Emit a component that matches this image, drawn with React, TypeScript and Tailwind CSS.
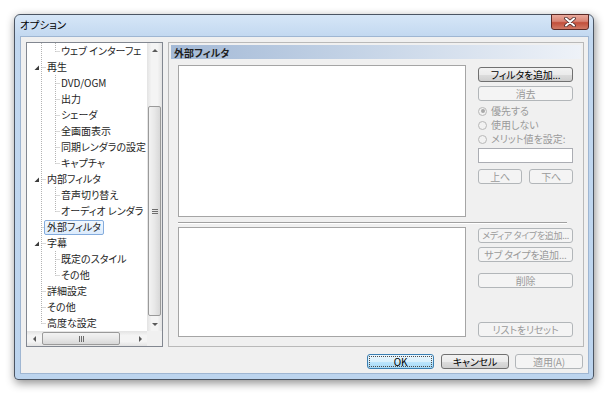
import clsx from 'clsx'

type Line = 'pipe' | 'tee' | 'end'

type Node = {
  label: string
  level: 0 | 1
  l0: Line
  l1?: Line
  open?: boolean
  selected?: boolean
}

const tree: Node[] = [
  { label: 'ウェブ インターフェ', level: 1, l0: 'pipe', l1: 'end' },
  { label: '再生', level: 0, l0: 'tee', open: true },
  { label: 'DVD/OGM', level: 1, l0: 'pipe', l1: 'tee' },
  { label: '出力', level: 1, l0: 'pipe', l1: 'tee' },
  { label: 'シェーダ', level: 1, l0: 'pipe', l1: 'tee' },
  { label: '全画面表示', level: 1, l0: 'pipe', l1: 'tee' },
  { label: '同期レンダラの設定', level: 1, l0: 'pipe', l1: 'tee' },
  { label: 'キャプチャ', level: 1, l0: 'pipe', l1: 'end' },
  { label: '内部フィルタ', level: 0, l0: 'tee', open: true },
  { label: '音声切り替え', level: 1, l0: 'pipe', l1: 'tee' },
  { label: 'オーディオ レンダラ', level: 1, l0: 'pipe', l1: 'end' },
  { label: '外部フィルタ', level: 0, l0: 'tee', selected: true },
  { label: '字幕', level: 0, l0: 'tee', open: true },
  { label: '既定のスタイル', level: 1, l0: 'pipe', l1: 'tee' },
  { label: 'その他', level: 1, l0: 'pipe', l1: 'end' },
  { label: '詳細設定', level: 0, l0: 'tee' },
  { label: 'その他', level: 0, l0: 'tee' },
  { label: '高度な設定', level: 0, l0: 'end' },
]

// dotted tree connector for one indent column
function Cell({ line, open }: { line?: Line; open?: boolean }) {
  return (
    <svg width="14" height="16" className="shrink-0">
      {line && (
        <line x1="7.5" y1="0" x2="7.5" y2={line === 'end' ? 8.5 : 16} stroke="#b4b4b4" strokeDasharray="1 1" />
      )}
      {line && line !== 'pipe' && (
        <line x1="7.5" y1="8.5" x2="12" y2="8.5" stroke="#b4b4b4" strokeDasharray="1 1" />
      )}
      {open && <polygon points="0.5,11 5,6.5 5,11" fill="#3c3c3c" />}
    </svg>
  )
}

function TreeRow({ n }: { n: Node }) {
  return (
    <div className="h-[16px] flex items-center pl-[7px] whitespace-nowrap">
      <Cell line={n.l0} open={n.open} />
      {n.level === 1 && <Cell line={n.l1} />}
      <span
        className={clsx(
          'ml-[-4px] px-[2px] h-[15px] flex items-center border rounded-[2px] leading-none',
          n.selected
            ? 'border-[#84acdd] bg-[linear-gradient(180deg,#f2f8fe,#dcebfc)]'
            : 'border-transparent'
        )}
      >
        {n.label}
      </span>
    </div>
  )
}

function Arrow({ dir }: { dir: 'up' | 'down' | 'left' | 'right' }) {
  const pts = {
    up: '1,5 4,2 7,5',
    down: '1,3 4,6 7,3',
    left: '5,1 2,4 5,7',
    right: '3,1 6,4 3,7',
  }[dir]
  return (
    <svg width="8" height="8">
      <polygon points={pts} fill="#5a5a5a" />
    </svg>
  )
}

function ScrollV() {
  return (
    <div className="w-[15px] flex flex-col bg-[linear-gradient(90deg,#e3e3e3,#f4f4f4_30%,#f4f4f4_70%,#e3e3e3)]">
      <div className="h-[15px] flex items-center justify-center">
        <Arrow dir="up" />
      </div>
      <div className="h-[48px]" />
      <div className="flex-1 mx-[1px] rounded-[2px] border border-[#9a9a9a] bg-[linear-gradient(90deg,#f3f3f3,#e8e8e8_50%,#d8d8d8)] flex flex-col items-center justify-center gap-[1px]">
        <div className="w-[6px] h-[1px] bg-[#6d6d6d]" />
        <div className="w-[6px] h-[1px] bg-[#6d6d6d]" />
        <div className="w-[6px] h-[1px] bg-[#6d6d6d]" />
      </div>
      <div className="h-[15px] flex items-center justify-center">
        <Arrow dir="down" />
      </div>
    </div>
  )
}

function ScrollH() {
  return (
    <div className="h-[15px] flex bg-[linear-gradient(180deg,#e3e3e3,#f4f4f4_30%,#f4f4f4_70%,#e3e3e3)]">
      <div className="w-[15px] flex items-center justify-center">
        <Arrow dir="left" />
      </div>
      <div className="w-[78px] my-[1px] rounded-[2px] border border-[#9a9a9a] bg-[linear-gradient(180deg,#f3f3f3,#e8e8e8_50%,#d8d8d8)] flex items-center justify-center gap-[1px]">
        <div className="w-[1px] h-[6px] bg-[#6d6d6d]" />
        <div className="w-[1px] h-[6px] bg-[#6d6d6d]" />
        <div className="w-[1px] h-[6px] bg-[#6d6d6d]" />
      </div>
      <div className="flex-1" />
      <div className="w-[15px] flex items-center justify-center">
        <Arrow dir="right" />
      </div>
    </div>
  )
}

function Btn({
  children,
  w,
  disabled,
  def,
  small,
}: {
  children: React.ReactNode
  w: string
  disabled?: boolean
  def?: boolean
  small?: boolean
}) {
  return (
    <div
      className={clsx(
        'h-[15px] flex items-center justify-center rounded-[3px] border leading-none shrink-0 whitespace-nowrap overflow-hidden',
        small ? 'text-[9px] tracking-[-0.3px]' : 'text-[10px] tracking-[-0.2px]',
        w,
        disabled && 'border-[#b2b6b9] bg-[#f4f4f4] text-[#9a9a9a]',
        def && 'border-[#3c7fb1] bg-[linear-gradient(180deg,#eaf6fd_0%,#d9f0fc_50%,#bee6fd_51%,#a7d9f5_100%)] text-black',
        !disabled && !def && 'border-[#707070] bg-[linear-gradient(180deg,#f2f2f2_0%,#ebebeb_50%,#dddddd_51%,#cfcfcf_100%)] text-black'
      )}
    >
      {def ? (
        <div className="self-stretch flex-1 m-[1px] border border-dotted border-[#4d4d4d] flex items-center justify-center">
          {children}
        </div>
      ) : (
        children
      )}
    </div>
  )
}

function Radio({ label, checked }: { label: string; checked?: boolean }) {
  return (
    <div className="h-[14px] flex items-center gap-[4px] text-[#9a9a9a]">
      <span className="w-[9px] h-[9px] rounded-full border border-[#b8b8b8] bg-[#f2f2f2] flex items-center justify-center">
        {checked && <span className="w-[4px] h-[4px] rounded-full bg-[#a8a8a8]" />}
      </span>
      <span className="leading-none">{label}</span>
    </div>
  )
}

export default function App() {
  return (
    <div className="w-[612px] h-[398px] bg-white pt-[14px] pl-[14px] font-['Noto_Sans_CJK_JP',sans-serif] [font-feature-settings:'palt'] text-[10px] text-[#1e1e1e]">
      <div className="w-[580px] h-[366px] flex flex-col border border-[#4b5563] rounded-t-[6px] rounded-b-[4px] bg-[linear-gradient(180deg,#d6e6f7_0px,#c2d8f0_22px,#bcd4ee_100%)] shadow-[1px_3px_10px_rgba(0,0,0,0.45)]">
        {/* title bar */}
        <div className="h-[21px] flex items-start pl-[5px] pr-[4px]">
          <span className="h-[20px] flex items-center text-[10.5px] text-black">オプション</span>
          <div className="ml-auto mt-[-1px] w-[38px] h-[16px] rounded-b-[3px] border border-[#5a2a26] bg-[linear-gradient(180deg,#e9a99c_0%,#d98474_45%,#c24f3b_55%,#d27a66_100%)] flex items-center justify-center">
            <svg width="12" height="10" viewBox="0 0 12 10">
              <path d="M2 1.5 L10 8.5 M10 1.5 L2 8.5" stroke="#4a2a2a" strokeWidth="3.6" strokeLinecap="round" />
              <path d="M2 1.5 L10 8.5 M10 1.5 L2 8.5" stroke="#ffffff" strokeWidth="2" strokeLinecap="round" />
            </svg>
          </div>
        </div>

        {/* client */}
        <div className="mx-[5px] mr-[4px] h-[338px] border border-[#9fb6d2] bg-[#f0f0f0] flex flex-col pt-[5px] pl-[5px] pr-[4px]">
          <div className="h-[305px] flex gap-[5px]">
            {/* tree */}
            <div className="w-[137px] flex flex-col border border-[#828790] bg-white">
              <div className="flex h-[288px]">
                <div className="flex-1 overflow-hidden">
                  {tree.map((n, i) => (
                    <TreeRow key={i} n={n} />
                  ))}
                </div>
                <ScrollV />
              </div>
              <div className="flex">
                <div className="flex-1">
                  <ScrollH />
                </div>
                <div className="w-[15px] bg-[#f0f0f0]" />
              </div>
            </div>

            {/* property page */}
            <div className="w-[416px] border border-[#b9b9b9] p-[2px] flex flex-col">
              <div className="h-[14px] flex items-center pl-[3px] font-bold bg-[linear-gradient(90deg,#a3b9d6_0%,#c4d3e6_45%,#eef2f8_100%)]">
                外部フィルタ
              </div>
              <div className="px-[7px] mt-[6px] flex flex-col">
                <div className="flex gap-[12px]">
                  <div className="w-[288px] h-[152px] bg-white border border-[#a5a5a5]" />
                  <div className="w-[95px] flex flex-col pt-[2px]">
                    <Btn w="w-[95px]">フィルタを追加...</Btn>
                    <div className="mt-[4px]">
                      <Btn w="w-[95px]" disabled>
                        消去
                      </Btn>
                    </div>
                    <div className="mt-[3px] flex flex-col">
                      <Radio label="優先する" checked />
                      <Radio label="使用しない" />
                      <Radio label="メリット値を設定:" />
                    </div>
                    <div className="mt-[2px] h-[15px] bg-white border border-[#abadb3]" />
                    <div className="mt-[6px] flex gap-[7px]">
                      <Btn w="w-[44px]" disabled>
                        上へ
                      </Btn>
                      <Btn w="w-[44px]" disabled>
                        下へ
                      </Btn>
                    </div>
                  </div>
                </div>

                <div className="mt-[5px] w-[389px] h-[2px] border-t border-[#a0a0a0] border-b border-b-white" />

                <div className="mt-[3px] flex gap-[12px]">
                  <div className="w-[288px] h-[110px] bg-white border border-[#a5a5a5]" />
                  <div className="w-[95px] flex flex-col pt-[1px]">
                    <Btn w="w-[95px]" disabled small>
                      メディア タイプを追加...
                    </Btn>
                    <div className="mt-[4px]">
                      <Btn w="w-[95px]" disabled>
                        サブ タイプを追加...
                      </Btn>
                    </div>
                    <div className="mt-[11px]">
                      <Btn w="w-[95px]" disabled>
                        削除
                      </Btn>
                    </div>
                    <div className="mt-auto">
                      <Btn w="w-[95px]" disabled>
                        リストをリセット
                      </Btn>
                    </div>
                  </div>
                </div>
              </div>
            </div>
          </div>

          {/* dialog buttons */}
          <div className="mt-[7px] flex justify-end pr-[1px]">
            <Btn w="w-[67px]" def>
              OK
            </Btn>
            <div className="ml-[7px]">
              <Btn w="w-[68px]">キャンセル</Btn>
            </div>
            <div className="ml-[6px]">
              <Btn w="w-[68px]" disabled>
                適用(A)
              </Btn>
            </div>
          </div>
        </div>
      </div>
    </div>
  )
}
